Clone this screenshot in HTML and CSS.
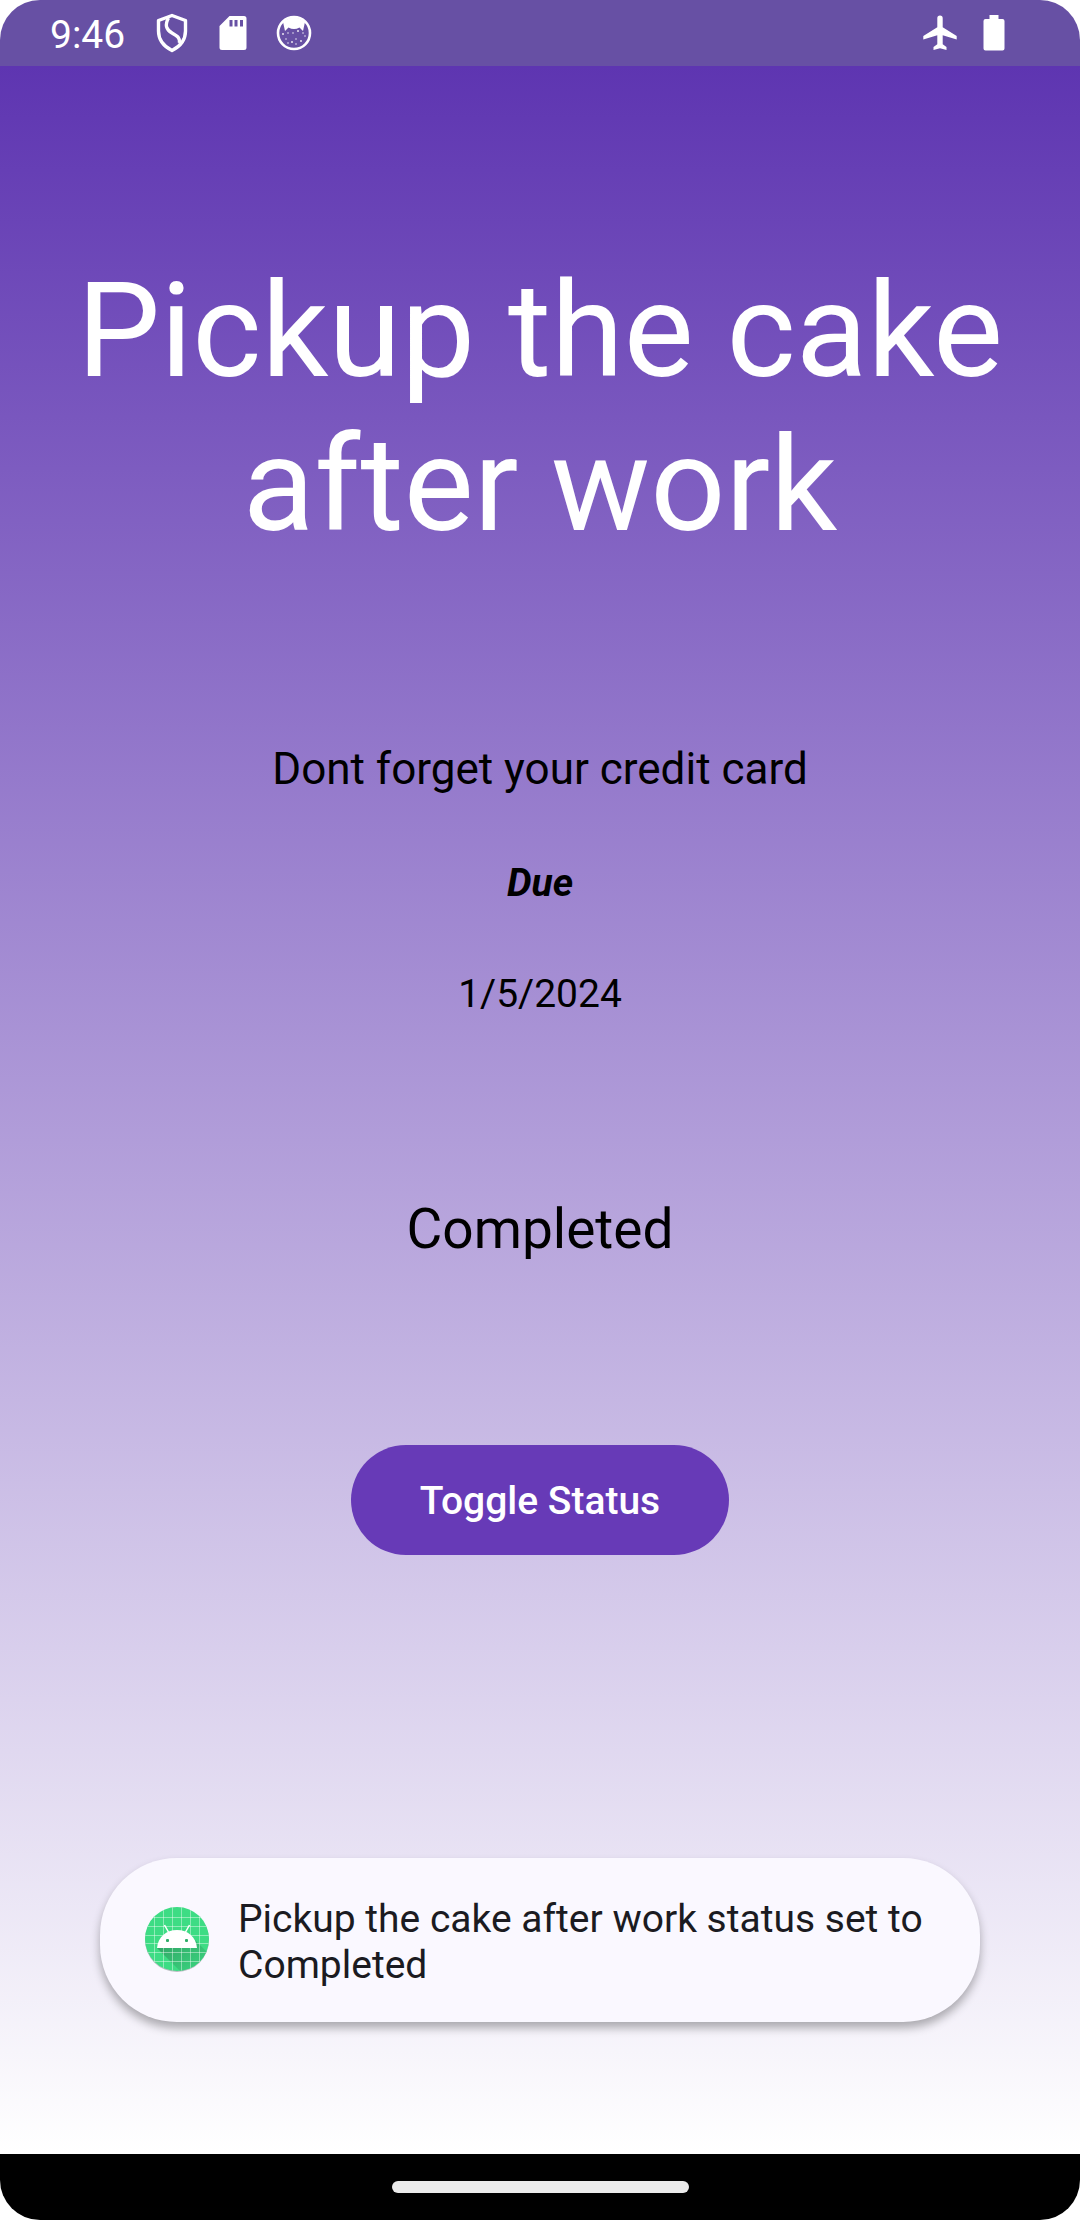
FILE: index.html
```html
<!DOCTYPE html>
<html lang="en">
<head>
  <meta charset="utf-8">
  <meta name="viewport" content="width=device-width, initial-scale=1">
  <title>Task detail</title>
  <link rel="stylesheet" href="styles.css">
</head>
<body>
  <div class="screen">
    <header class="status-bar">
      <div class="status-group status-start">
        <time class="clock">9:46</time>
        <svg class="status-icon" viewBox="0 0 40 40" aria-hidden="true">
          <path d="M20 2.5 L33.5 7.5 V18 C33.5 27 28 33.5 20 37.500 C12 33.500 6.500 27 6.500 18 V7.500 Z" fill="none" stroke="#fff" stroke-width="3.400" stroke-linejoin="round"/>
          <path d="M16.500 5 C12 13 15 17 20 20 C26 23.500 28 25 27.500 30" fill="none" stroke="#fff" stroke-width="3.400"/>
        </svg>
        <svg class="status-icon" viewBox="0 0 40 40" aria-hidden="true">
          <path fill="#fff" fill-rule="evenodd" d="M16.500 3 H31 Q33.500 3 33.500 5.500 V34.500 Q33.500 37 31 37 H9 Q6.500 37 6.500 34.500 V13 Z M16.500 7 V13.500 H19.500 V7 Z M21.500 7 V13.500 H24.500 V7 Z M27 7 V13.500 H30 V7 Z"/>
        </svg>
        <svg class="status-icon" viewBox="0 0 40 40" aria-hidden="true">
          <circle cx="20" cy="20" r="16" fill="none" stroke="#fff" stroke-width="2.600"/>
          <path fill="#fff" d="M9 9 Q20 0 31 9 L29 18 L25.500 14.500 Q20 17.500 14.500 14.500 L11 18 Z"/>
          <g fill="#fff" opacity=".85">
            <circle cx="9" cy="21" r="1"/><circle cx="14" cy="20" r=".8"/><circle cx="19" cy="20" r=".8"/>
            <circle cx="24" cy="18" r="1"/><circle cx="29" cy="20" r=".8"/><circle cx="31" cy="23" r=".8"/>
            <circle cx="12" cy="26" r=".8"/><circle cx="18" cy="29" r="1"/><circle cx="22" cy="26" r=".8"/>
            <circle cx="27" cy="28" r="1"/><circle cx="22" cy="31" r=".8"/><circle cx="14" cy="30" r=".8"/>
          </g>
        </svg>
      </div>
      <div class="status-group status-end">
        <svg class="status-icon" viewBox="0 0 40 40" aria-hidden="true">
          <path fill="#fff" d="M36.700 26.500 V23 L22.700 14.300 V5.300 A2.700 2.700 0 0 0 17.300 5.300 V14.300 L3.300 23 V26.500 L17.300 22.200 V31.200 L13.500 34 V37 L20 35.200 L26.500 37 V34 L22.700 31.200 V22.200 Z"/>
        </svg>
        <svg class="status-icon" viewBox="0 0 40 40" aria-hidden="true">
          <path fill="#fff" d="M15.500 2 H24.500 V6 H28.500 Q30.500 6 30.500 8 V35.500 Q30.500 37.500 28.500 37.500 H11.500 Q9.500 37.500 9.500 35.500 V8 Q9.500 6 11.500 6 H15.500 Z"/>
        </svg>
      </div>
    </header>

    <main class="task">
      <h1 class="task-title">Pickup the cake after work</h1>
      <p class="task-body">Dont forget your credit card</p>
      <p class="task-due">Due</p>
      <p class="task-date">1/5/2024</p>
      <p class="task-status">Completed</p>
      <button class="toggle" type="button">Toggle Status</button>

      <div class="toast" role="status">
        <svg class="toast-icon" viewBox="0 0 66 66" aria-hidden="true">
          <defs>
            <clipPath id="disc"><circle cx="33" cy="32" r="32"/></clipPath>
            <linearGradient id="shade" x1="0" y1="0" x2="1" y2="1">
              <stop offset="0" stop-color="#2f9f62"/>
              <stop offset="1" stop-color="#3ddc84"/>
            </linearGradient>
          </defs>
          <circle cx="33" cy="33" r="32" fill="#b9bdc2"/>
          <g clip-path="url(#disc)">
            <rect width="66" height="66" fill="#3ddc84"/>
            <path fill="url(#shade)" d="M13 41 L38 66 H66 V48 L50 32 L53 41 Z"/>
            <path d="M10.500 0V66M19.500 0V66M28.500 0V66M37.500 0V66M46.500 0V66M55.500 0V66M0 10.500H66M0 19.500H66M0 28.500H66M0 36.500H66M0 45.500H66M0 54.500H66" stroke="#fff" stroke-opacity=".42" stroke-width="1"/>
          </g>
          <path fill="#fff" d="M13 41 C14 30 22 23 33 23 S52 30 53 41 Z"/>
          <path d="M20.500 18 L25 26 M45.500 18 L41 26" stroke="#fff" stroke-width="1.500"/>
          <rect x="22" y="32" width="3" height="3" rx="1" fill="#2fae69"/>
          <rect x="41" y="32" width="3" height="3" rx="1" fill="#2fae69"/>
        </svg>
        <p class="toast-text">Pickup the cake after work status set to Completed</p>
      </div>
    </main>

    <footer class="nav-bar">
      <div class="nav-handle"></div>
    </footer>
  </div>
</body>
</html>
```

FILE: styles.css
```css
* {
  box-sizing: border-box;
}

body {
  margin: 0;
  background: #fff;
  font-family: Roboto, "Noto Sans", sans-serif;
  color: #000;
}

h1,
p {
  margin: 0;
  font-weight: 400;
}

.screen {
  display: flex;
  flex-direction: column;
  min-height: 100vh;
  border-radius: 40px;
  overflow: hidden;
}

/* Status bar */
.status-bar {
  display: flex;
  justify-content: space-between;
  align-items: center;
  height: 66px;
  padding: 0 66px 0 50px;
  background: #6750a4;
  color: #fff;
}

.status-group {
  display: flex;
  align-items: center;
}

.status-start {
  gap: 21px;
}

.status-end {
  gap: 14px;
}

.clock {
  padding: 3px 6px 0 0;
  font-size: 39px;
  line-height: 46px;
}

.status-icon {
  width: 40px;
  height: 40px;
}

/* Task */
.task {
  position: relative;
  flex: 1;
  display: flex;
  flex-direction: column;
  align-items: center;
  padding: 188px 40px 400px;
  text-align: center;
  background: linear-gradient(#5e35b1, #fff);
}

.task-title {
  font-size: 132px;
  line-height: 154px;
  color: #fff;
}

.task-body {
  margin-top: 181px;
  font-size: 44px;
  line-height: 52px;
}

.task-due,
.task-date {
  margin-top: 65px;
  font-size: 39px;
  line-height: 46px;
}

.task-due {
  font-weight: 700;
  font-style: italic;
}

.task-status {
  margin-top: 180px;
  font-size: 55px;
  line-height: 64px;
}

.toggle {
  margin-top: 184px;
  padding: 33px 69px 31px;
  border: 0;
  border-radius: 55px;
  background: #673ab7;
  color: #fff;
  font: 500 39px/46px Roboto, "Noto Sans", sans-serif;
}

/* Toast floats over the bottom of the task */
.toast {
  position: absolute;
  right: 100px;
  bottom: 132px;
  left: 100px;
  display: flex;
  align-items: center;
  gap: 28px;
  padding: 34px 44px;
  border-radius: 77px;
  background: #faf8ff;
  color: #1b1b21;
  text-align: left;
  box-shadow: 0 6px 10px rgba(0, 0, 0, 0.3);
}

.toast-icon {
  flex: none;
  width: 66px;
  height: 66px;
}

.toast-text {
  padding-top: 4px;
  font-size: 39px;
  line-height: 46px;
}

/* Gesture navigation */
.nav-bar {
  display: flex;
  justify-content: center;
  align-items: center;
  height: 66px;
  background: #000;
}

.nav-handle {
  width: 297px;
  height: 12px;
  border-radius: 6px;
  background: #ebebeb;
}
```
